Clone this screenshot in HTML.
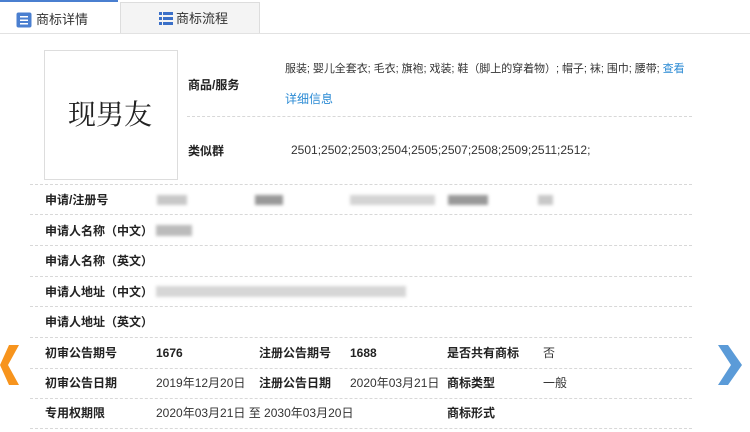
<!DOCTYPE html>
<html><head><meta charset="utf-8"><style>
body{margin:0;width:750px;height:432px;background:#fff;position:relative;overflow:hidden;font-family:"Liberation Sans","Noto Sans CJK SC",sans-serif;font-size:12px;color:#333}
.a{position:absolute;white-space:nowrap;line-height:16px}
.b{font-weight:bold;color:#222}
.dl{position:absolute;left:30px;width:662px;border-top:1px dashed #d8d8d8;height:0}
.g{position:absolute;background:#c8c8c8;filter:blur(1.5px)}
</style></head><body>
<div class="a" style="left:0;top:0;width:118px;height:34px;border-top:2px solid #4a7fd0;box-sizing:border-box;background:#fff"></div>
<div class="a" style="left:120px;top:2px;width:140px;height:32px;background:#f4f4f4;border:1px solid #ddd;border-bottom:none;box-sizing:border-box"></div>
<div class="a" style="left:0;top:33px;width:750px;border-top:1px solid #e2e2e2"></div>
<svg class="a" style="left:16px;top:12px" width="16" height="16"><rect x="0.5" y="0.5" width="15" height="15" rx="2" fill="#4a7fd0"/><rect x="4" y="4" width="8" height="1.5" fill="#fff"/><rect x="4" y="7.5" width="8" height="1.5" fill="#fff"/><rect x="4" y="11" width="8" height="1.5" fill="#fff"/></svg>
<div class="a" style="left:36px;top:12px;font-size:13px;color:#333">商标详情</div>
<svg class="a" style="left:159px;top:12px" width="14" height="14" fill="#3a6fc8"><rect x="0" y="0" width="3" height="3"/><rect x="4" y="0" width="10" height="3"/><rect x="0" y="5" width="3" height="3"/><rect x="4" y="5" width="10" height="3"/><rect x="0" y="10" width="3" height="3"/><rect x="4" y="10" width="10" height="3"/></svg>
<div class="a" style="left:176px;top:11px;font-size:13px;color:#333">商标流程</div>

<div class="a" style="left:44px;top:50px;width:134px;height:130px;border:1px solid #ddd;box-sizing:border-box"></div>
<div class="a" style="left:68px;top:97px;font-size:28px;line-height:32px;font-family:'Noto Serif CJK SC',serif;color:#222">现男友</div>

<div class="a b" style="left:188px;top:77px">商品/服务</div>
<div class="a" style="left:285px;top:61px;font-size:11px;letter-spacing:-0.05px">服装; 婴儿全套衣; 毛衣; 旗袍; 戏装; 鞋（脚上的穿着物）; 帽子; 袜; 围巾; 腰带; <span style="color:#2a8ad4">查看</span></div>
<div class="a" style="left:285px;top:91px;color:#2a8ad4">详细信息</div>
<div class="a" style="left:187px;top:116px;width:505px;border-top:1px dashed #d8d8d8"></div>
<div class="a b" style="left:188px;top:143px">类似群</div>
<div class="a" style="left:291px;top:142px">2501;2502;2503;2504;2505;2507;2508;2509;2511;2512;</div>

<div class="dl" style="top:184px"></div>
<div class="a b" style="left:45px;top:192px">申请/注册号</div>
<div class="g" style="left:157px;top:195px;width:30px;height:10px"></div>
<div class="g" style="left:255px;top:195px;width:28px;height:10px;background:#999"></div>
<div class="g" style="left:350px;top:195px;width:85px;height:10px;background:#d4d4d4"></div>
<div class="g" style="left:448px;top:195px;width:40px;height:10px;background:#999"></div>
<div class="g" style="left:538px;top:195px;width:15px;height:10px"></div>
<div class="dl" style="top:214px"></div>
<div class="a b" style="left:45px;top:223px">申请人名称（中文）</div>
<div class="g" style="left:156px;top:225px;width:36px;height:11px;background:#bbb"></div>
<div class="dl" style="top:245px"></div>
<div class="a b" style="left:45px;top:253px">申请人名称（英文）</div>
<div class="dl" style="top:276px"></div>
<div class="a b" style="left:45px;top:284px">申请人地址（中文）</div>
<div class="g" style="left:156px;top:286px;width:250px;height:11px;background:#d6d6d6"></div>
<div class="dl" style="top:306px"></div>
<div class="a b" style="left:45px;top:314px">申请人地址（英文）</div>
<div class="dl" style="top:337px"></div>
<div class="a b" style="left:45px;top:345px">初审公告期号</div>
<div class="a b" style="left:156px;top:345px">1676</div>
<div class="a b" style="left:259px;top:345px">注册公告期号</div>
<div class="a b" style="left:350px;top:345px">1688</div>
<div class="a b" style="left:447px;top:345px">是否共有商标</div>
<div class="a" style="left:543px;top:345px">否</div>
<div class="dl" style="top:368px"></div>
<div class="a b" style="left:45px;top:375px">初审公告日期</div>
<div class="a" style="left:156px;top:375px">2019年12月20日</div>
<div class="a b" style="left:259px;top:375px">注册公告日期</div>
<div class="a" style="left:350px;top:375px">2020年03月21日</div>
<div class="a b" style="left:447px;top:375px">商标类型</div>
<div class="a" style="left:543px;top:375px">一般</div>
<div class="dl" style="top:398px"></div>
<div class="a b" style="left:45px;top:405px">专用权期限</div>
<div class="a" style="left:156px;top:405px">2020年03月21日 至 2030年03月20日</div>
<div class="a b" style="left:447px;top:405px">商标形式</div>
<div class="dl" style="top:428px"></div>

<svg class="a" style="left:0;top:345px" width="20" height="42"><polygon points="19,0 8,20 19,40 9,40 0,20 9,0" fill="#f7941d"/></svg>
<svg class="a" style="left:718px;top:345px" width="26" height="42"><polygon points="0,0 13,20 0,40 10,40 24,20 10,0" fill="#5b9bd8"/></svg>
</body></html>
